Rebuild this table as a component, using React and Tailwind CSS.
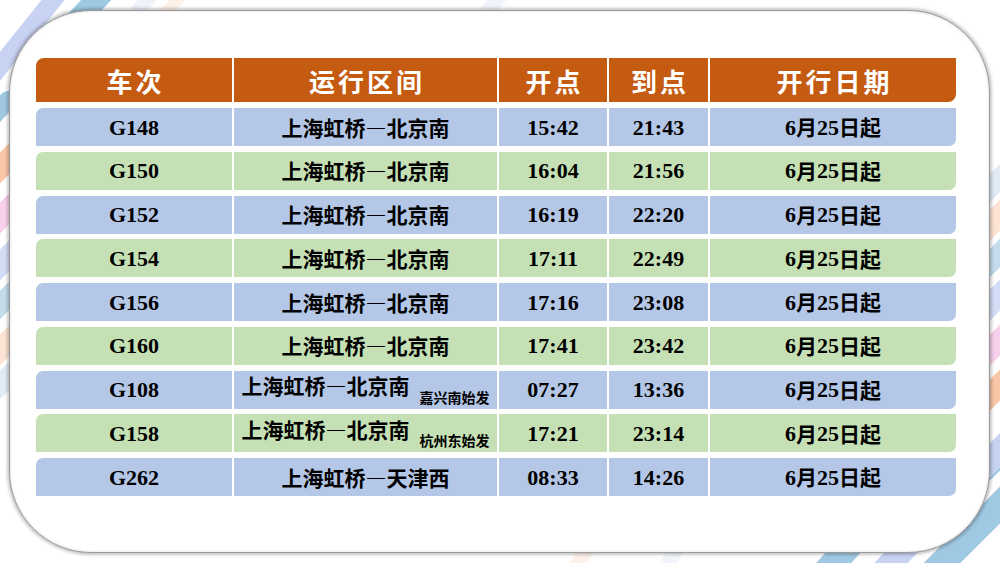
import React from "react";

const CJK = { fontFamily: '"Noto Sans CJK SC", "Noto Sans", sans-serif' };

const rows = [
  ["G148", "上海虹桥", "北京南", "15:42", "21:43", null],
  ["G150", "上海虹桥", "北京南", "16:04", "21:56", null],
  ["G152", "上海虹桥", "北京南", "16:19", "22:20", null],
  ["G154", "上海虹桥", "北京南", "17:11", "22:49", null],
  ["G156", "上海虹桥", "北京南", "17:16", "23:08", null],
  ["G160", "上海虹桥", "北京南", "17:41", "23:42", null],
  ["G108", "上海虹桥", "北京南", "07:27", "13:36", "嘉兴南始发"],
  ["G158", "上海虹桥", "北京南", "17:21", "23:14", "杭州东始发"],
  ["G262", "上海虹桥", "天津西", "08:33", "14:26", null],
];

const stripes = [
  // top-left
  { x1: -15, y1: 85, x2: 65, y2: -15, w: 18, c: "#c8d3f3" },
  { x1: 35, y1: 65, x2: 115, y2: -20, w: 22, c: "#9fc8e2" },
  { x1: -12, y1: 122, x2: 8, y2: 100, w: 18, c: "#9fc8e2" },
  { x1: 130, y1: 20, x2: 160, y2: -15, w: 14, c: "#eef2fb" },
  { x1: 160, y1: 20, x2: 190, y2: -15, w: 12, c: "#fdf1e9" },
  { x1: 480, y1: 20, x2: 510, y2: -15, w: 14, c: "#f1f5fb" },
  // left side
  { x1: -20, y1: 188, x2: 20, y2: 148, w: 22, c: "#f9c6a6" },
  { x1: -20, y1: 238, x2: 20, y2: 198, w: 22, c: "#f8d0ec" },
  { x1: -20, y1: 285, x2: 20, y2: 245, w: 22, c: "#d5dcf6" },
  { x1: -20, y1: 325, x2: 20, y2: 285, w: 20, c: "#c4dcec" },
  { x1: -20, y1: 370, x2: 20, y2: 330, w: 22, c: "#fde3d3" },
  { x1: -20, y1: 405, x2: 20, y2: 365, w: 20, c: "#e1ebf5" },
  // right side
  { x1: 975, y1: 203, x2: 1015, y2: 163, w: 20, c: "#e1ebf5" },
  { x1: 975, y1: 240, x2: 1015, y2: 200, w: 22, c: "#fde3d3" },
  { x1: 975, y1: 278, x2: 1015, y2: 238, w: 20, c: "#c4dcec" },
  { x1: 975, y1: 320, x2: 1015, y2: 280, w: 22, c: "#d5dcf6" },
  { x1: 975, y1: 365, x2: 1015, y2: 325, w: 22, c: "#f8d0ec" },
  { x1: 975, y1: 410, x2: 1015, y2: 370, w: 22, c: "#f9c6a6" },
  { x1: 985, y1: 470, x2: 1015, y2: 440, w: 22, c: "#9fc8e2" },
  // bottom-right
  { x1: 800, y1: 600, x2: 900, y2: 490, w: 26, c: "#9fc8e2" },
  { x1: 855, y1: 600, x2: 1010, y2: 440, w: 24, c: "#c8d3f3" },
  { x1: 905, y1: 600, x2: 1030, y2: 475, w: 26, c: "#9fc8e2" },
  { x1: 560, y1: 590, x2: 590, y2: 545, w: 14, c: "#fdf1e9" },
  { x1: 650, y1: 590, x2: 680, y2: 545, w: 14, c: "#f1f5fb" },
];

function Cell({ children, className = "" }) {
  return (
    <div className={"flex items-center justify-center h-full " + className}>
      {children}
    </div>
  );
}

function Route({ a, b, className = "" }) {
  return (
    <span style={CJK} className={"flex items-center text-[21px] leading-none " + className}>
      <span>{a}</span>
      <span className="inline-block w-[21px] text-center">―</span>
      <span>{b}</span>
    </span>
  );
}

function DateText() {
  return (
    <span className="flex items-center">
      <span>6</span>
      <span style={CJK} className="text-[21px]">月</span>
      <span>25</span>
      <span style={CJK} className="text-[21px]">日起</span>
    </span>
  );
}

export default function App() {
  return (
    <div className="relative w-[1000px] h-[563px] overflow-hidden bg-white">
      <svg className="absolute inset-0" width="1000" height="563">
        {stripes.map((s, i) => (
          <line
            key={i}
            x1={s.x1}
            y1={s.y1}
            x2={s.x2}
            y2={s.y2}
            stroke={s.c}
            strokeWidth={s.w}
            strokeLinecap="round"
          />
        ))}
      </svg>
      <div className="relative ml-[9px] mt-[10px] w-[981px] h-[543px] rounded-[82px] bg-white border border-[#9a9a9a] shadow-[0_0_3px_2px_rgba(0,0,0,0.22),inset_0_0_3px_rgba(0,0,0,0.15)] pl-[26px] pt-[47px]">
        <div
          className="grid grid-cols-[196px_263px_108px_99px_246px] gap-x-[2px] w-[920px]"
          style={CJK}
        >
          {["车次", "运行区间", "开点", "到点", "开行日期"].map((h, i) => (
            <div
              key={h}
              className={
                "h-[44px] flex items-center justify-center bg-[#c55a11] text-white font-bold text-[26px] tracking-[3px] " +
                (i === 0 ? "rounded-tl-[8px]" : "") +
                (i === 4 ? "rounded-br-[8px]" : "")
              }
            >
              <span className="-mr-[3px]">{h}</span>
            </div>
          ))}
        </div>
        <div
          className="flex flex-col gap-y-[5.75px] mt-[6px] w-[920px] text-black font-bold text-[22px]"
          style={{ fontFamily: '"Liberation Serif", "Noto Sans CJK SC", serif' }}
        >
          {rows.map((r, idx) => {
            const bg = idx % 2 === 0 ? "bg-[#b4c7e7]" : "bg-[#c5e0b4]";
            return (
              <div
                key={r[0]}
                className="grid grid-cols-[196px_263px_108px_99px_246px] gap-x-[2px] h-[38px]"
              >
                <Cell className={bg + " rounded-tl-[7px]"}>{r[0]}</Cell>
                <Cell className={bg}>
                  {r[5] ? (
                    <span className="flex items-center gap-x-[10px]">
                      <Route a={r[1]} b={r[2]} className="mb-[8px]" />
                      <span style={CJK} className="text-[14px] mt-[14px] leading-none">
                        {r[5]}
                      </span>
                    </span>
                  ) : (
                    <Route a={r[1]} b={r[2]} />
                  )}
                </Cell>
                <Cell className={bg}>{r[3]}</Cell>
                <Cell className={bg}>{r[4]}</Cell>
                <Cell className={bg + " rounded-br-[7px]"}>
                  <DateText />
                </Cell>
              </div>
            );
          })}
        </div>
      </div>
    </div>
  );
}
